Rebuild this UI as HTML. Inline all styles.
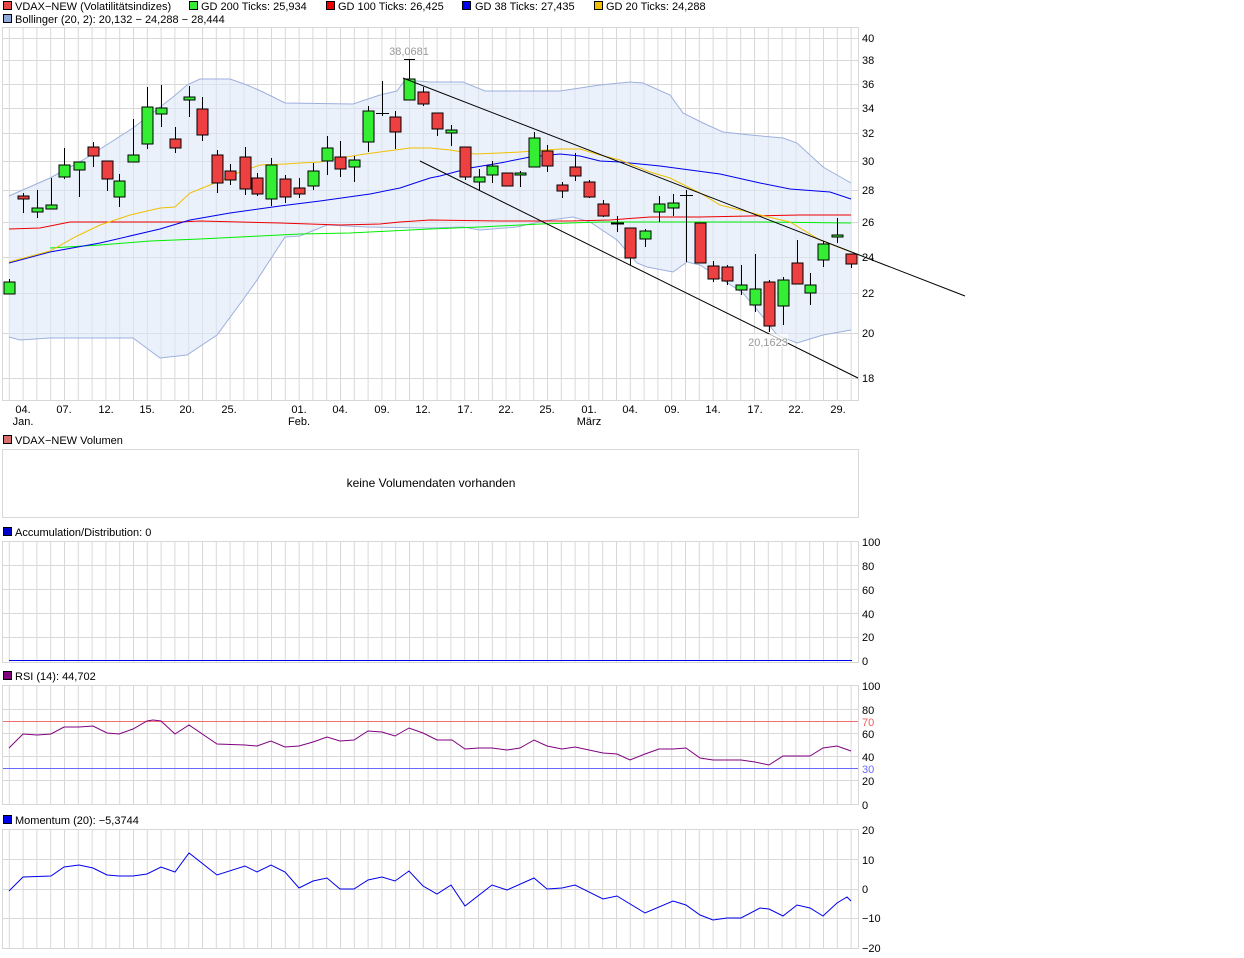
<!DOCTYPE html>
<html><head><meta charset="utf-8"><style>
body{margin:0;background:#fff;width:1244px;height:958px;overflow:hidden;font-family:"Liberation Sans",sans-serif}
svg{position:absolute;left:0;top:0}
text{font-family:"Liberation Sans",sans-serif;font-size:11px;fill:#000}
</style></head><body>
<svg width="1244" height="958" viewBox="0 0 1244 958">
<defs>
<pattern id="vg" patternUnits="userSpaceOnUse" x="8.8" y="0" width="13.8" height="958"><rect x="0" y="0" width="1" height="958" fill="#d8d8d8"/></pattern>
</defs>
<g stroke="#000" stroke-width="1">
<rect x="3.5" y="1.5" width="8" height="8" fill="#e84848"/>
<rect x="189.5" y="1.5" width="8" height="8" fill="#33ee33"/>
<rect x="326.5" y="1.5" width="8" height="8" fill="#ee0000"/>
<rect x="462.5" y="1.5" width="8" height="8" fill="#0000ee"/>
<rect x="594.5" y="1.5" width="8" height="8" fill="#f0c000"/>
<rect x="3.5" y="14.5" width="8" height="8" fill="#8fa8d8"/>
<rect x="3.5" y="435.5" width="8" height="8" fill="#d87070"/>
<rect x="3.5" y="527.5" width="8" height="8" fill="#0000cc"/>
<rect x="3.5" y="671.5" width="8" height="8" fill="#800080"/>
<rect x="3.5" y="815.5" width="8" height="8" fill="#0000ee"/>
</g>
<text x="15" y="10">VDAX−NEW (Volatilitätsindizes)</text>
<text x="201" y="10">GD 200 Ticks: 25,934</text>
<text x="338" y="10">GD 100 Ticks: 26,425</text>
<text x="475" y="10">GD 38 Ticks: 27,435</text>
<text x="606" y="10">GD 20 Ticks: 24,288</text>
<text x="15" y="23">Bollinger (20, 2): 20,132 − 24,288 − 28,444</text>
<text x="15" y="444">VDAX−NEW Volumen</text>
<text x="15" y="536">Accumulation/Distribution: 0</text>
<text x="15" y="680">RSI (14): 44,702</text>
<text x="15" y="824">Momentum (20): −5,3744</text>

<rect x="3" y="28" width="855" height="372" fill="url(#vg)"/>
<g stroke="#d8d8d8" stroke-width="1">
<line x1="3" y1="38.5" x2="858" y2="38.5"/><line x1="3" y1="60.5" x2="858" y2="60.5"/><line x1="3" y1="84.5" x2="858" y2="84.5"/><line x1="3" y1="108.5" x2="858" y2="108.5"/><line x1="3" y1="133.5" x2="858" y2="133.5"/><line x1="3" y1="161.5" x2="858" y2="161.5"/><line x1="3" y1="190.5" x2="858" y2="190.5"/><line x1="3" y1="222.5" x2="858" y2="222.5"/><line x1="3" y1="257.5" x2="858" y2="257.5"/><line x1="3" y1="293.5" x2="858" y2="293.5"/><line x1="3" y1="333.5" x2="858" y2="333.5"/><line x1="3" y1="378.5" x2="858" y2="378.5"/>
</g>
<rect x="2.5" y="27.5" width="856" height="373" fill="none" stroke="#d8d8d8"/>
<polygon fill="#dce8f8" fill-opacity="0.6" stroke="none" points="9,196 50,178 83,160 133,128 173,97 187,85 200,79 230,79 247,85 263,92 285,103 353,104 380,95 397,91 405,80 430,82 463,82 485,91 560,91 600,85 630,82 643,83 670,95 683,113 703,123 723,132 750,135 783,138 797,143 823,167 851,183 851,330 823,335 797,343 777,335 763,317 743,293 723,280 700,265 687,262 673,272 647,267 637,263 617,240 590,222 573,217 543,221 517,227 480,230 463,227 430,228 367,227 327,225 300,236 285,237 257,280 245,297 217,335 187,355 160,358 133,338 50,338 20,340 9,337"/>
<polyline fill="none" stroke="#9db0dd" points="9,196 50,178 83,160 133,128 173,97 187,85 200,79 230,79 247,85 263,92 285,103 353,104 380,95 397,91 405,80 430,82 463,82 485,91 560,91 600,85 630,82 643,83 670,95 683,113 703,123 723,132 750,135 783,138 797,143 823,167 851,183"/>
<polyline fill="none" stroke="#9db0dd" points="9,337 20,340 50,338 133,338 160,358 187,355 217,335 245,297 257,280 285,237 300,236 327,225 367,227 430,228 463,227 480,230 517,227 543,221 573,217 590,222 617,240 637,263 647,267 673,272 687,262 700,265 723,280 743,293 763,317 777,335 797,343 823,335 851,330"/>
<polyline fill="none" stroke="#00ee00" points="50,248 100,245 150,241 200,239 260,236 300,234 350,233 390,231 430,229 480,227 540,224 600,222 700,222 760,222 851,223"/>
<polyline fill="none" stroke="#ee0000" points="9,229 40,228 70,222 100,222 180,222 200,221 280,223 340,225 380,224 400,222 430,220 500,221 570,221 610,220 650,217 700,217 750,216 800,215 851,215"/>
<polyline fill="none" stroke="#0000ee" points="9,263 50,252 100,243 160,229 190,220 230,213 280,206 320,201 370,194 400,188 430,178 440,176 470,168 500,163 530,157 560,154 580,156 600,161 620,162 640,164 660,166 690,170 720,174 760,183 790,189 830,192 851,199"/>
<polyline fill="none" stroke="#f0c000" points="9,262 50,251 75,237 100,225 130,215 160,208 175,207 190,193 210,185 240,172 260,165 285,164 300,163 320,162 340,158 365,154 395,150 410,148 430,148 450,150 475,154 500,153 520,152 560,149 580,149 600,155 620,160 650,172 670,178 700,193 720,205 760,215 790,222 820,240 851,252"/>
<g stroke="#000" stroke-width="1">
<line x1="9.5" y1="279" x2="9.5" y2="294"/><rect x="4" y="282" width="11" height="12" fill="#33ee33"/>
<line x1="23.5" y1="193" x2="23.5" y2="213"/><rect x="18" y="196" width="11" height="3" fill="#ee4040"/>
<line x1="37.5" y1="190" x2="37.5" y2="218"/><rect x="32" y="208" width="11" height="4" fill="#33ee33"/>
<line x1="51.5" y1="178" x2="51.5" y2="209"/><rect x="46" y="205" width="11" height="4" fill="#33ee33"/>
<line x1="64.5" y1="148" x2="64.5" y2="179"/><rect x="59" y="165" width="11" height="12" fill="#33ee33"/>
<line x1="79.5" y1="162" x2="79.5" y2="197"/><rect x="74" y="162" width="11" height="8" fill="#33ee33"/>
<line x1="93.5" y1="142" x2="93.5" y2="167"/><rect x="88" y="147" width="11" height="9" fill="#ee4040"/>
<line x1="107.5" y1="161" x2="107.5" y2="191"/><rect x="102" y="161" width="11" height="18" fill="#ee4040"/>
<line x1="119.5" y1="174" x2="119.5" y2="207"/><rect x="114" y="181" width="11" height="16" fill="#33ee33"/>
<line x1="133.5" y1="119" x2="133.5" y2="162"/><rect x="128" y="155" width="11" height="7" fill="#33ee33"/>
<line x1="147.5" y1="87" x2="147.5" y2="149"/><rect x="142" y="107" width="11" height="37" fill="#33ee33"/>
<line x1="161.5" y1="85" x2="161.5" y2="127"/><rect x="156" y="108" width="11" height="6" fill="#33ee33"/>
<line x1="175.5" y1="127" x2="175.5" y2="153"/><rect x="170" y="139" width="11" height="9" fill="#ee4040"/>
<line x1="189.5" y1="86" x2="189.5" y2="117"/><rect x="184" y="97" width="11" height="3" fill="#33ee33"/>
<line x1="202.5" y1="97" x2="202.5" y2="141"/><rect x="197" y="109" width="11" height="26" fill="#ee4040"/>
<line x1="217.5" y1="150" x2="217.5" y2="193"/><rect x="212" y="155" width="11" height="28" fill="#ee4040"/>
<line x1="230.5" y1="164" x2="230.5" y2="185"/><rect x="225" y="171" width="11" height="9" fill="#ee4040"/>
<line x1="245.5" y1="147" x2="245.5" y2="195"/><rect x="240" y="157" width="11" height="32" fill="#ee4040"/>
<line x1="257.5" y1="173" x2="257.5" y2="196"/><rect x="252" y="178" width="11" height="16" fill="#ee4040"/>
<line x1="271.5" y1="158" x2="271.5" y2="206"/><rect x="266" y="165" width="11" height="34" fill="#33ee33"/>
<line x1="285.5" y1="175" x2="285.5" y2="203"/><rect x="280" y="179" width="11" height="18" fill="#ee4040"/>
<line x1="299.5" y1="178" x2="299.5" y2="198"/><rect x="294" y="188" width="11" height="6" fill="#ee4040"/>
<line x1="313.5" y1="163" x2="313.5" y2="190"/><rect x="308" y="171" width="11" height="15" fill="#33ee33"/>
<line x1="327.5" y1="136" x2="327.5" y2="175"/><rect x="322" y="148" width="11" height="13" fill="#33ee33"/>
<line x1="340.5" y1="141" x2="340.5" y2="177"/><rect x="335" y="157" width="11" height="12" fill="#ee4040"/>
<line x1="354.5" y1="156" x2="354.5" y2="182"/><rect x="349" y="160" width="11" height="7" fill="#33ee33"/>
<line x1="368.5" y1="106" x2="368.5" y2="152"/><rect x="363" y="111" width="11" height="31" fill="#33ee33"/>
<line x1="382.5" y1="81" x2="382.5" y2="116"/><line x1="376" y1="113.5" x2="389" y2="113.5"/>
<line x1="395.5" y1="111" x2="395.5" y2="149"/><rect x="390" y="117" width="11" height="15" fill="#ee4040"/>
<line x1="409.5" y1="59" x2="409.5" y2="100"/><line x1="404" y1="59.5" x2="415" y2="59.5"/><rect x="404" y="79" width="11" height="21" fill="#33ee33"/>
<line x1="423.5" y1="87" x2="423.5" y2="106"/><rect x="418" y="92" width="11" height="12" fill="#ee4040"/>
<line x1="437.5" y1="113" x2="437.5" y2="136"/><rect x="432" y="113" width="11" height="16" fill="#ee4040"/>
<line x1="451.5" y1="125" x2="451.5" y2="146"/><rect x="446" y="130" width="11" height="3" fill="#33ee33"/>
<line x1="465.5" y1="147" x2="465.5" y2="180"/><rect x="460" y="147" width="11" height="30" fill="#ee4040"/>
<line x1="479.5" y1="169" x2="479.5" y2="190"/><rect x="474" y="177" width="11" height="5" fill="#33ee33"/>
<line x1="492.5" y1="161" x2="492.5" y2="183"/><rect x="487" y="166" width="11" height="9" fill="#33ee33"/>
<rect x="502" y="173" width="11" height="13" fill="#ee4040"/>
<line x1="520.5" y1="171" x2="520.5" y2="187"/><rect x="515" y="173" width="11" height="2" fill="#33ee33"/>
<line x1="534.5" y1="132" x2="534.5" y2="167"/><rect x="529" y="138" width="11" height="29" fill="#33ee33"/>
<line x1="547.5" y1="145" x2="547.5" y2="172"/><rect x="542" y="151" width="11" height="15" fill="#ee4040"/>
<line x1="562.5" y1="182" x2="562.5" y2="198"/><rect x="557" y="185" width="11" height="6" fill="#ee4040"/>
<line x1="575.5" y1="153" x2="575.5" y2="181"/><rect x="570" y="167" width="11" height="9" fill="#ee4040"/>
<line x1="589.5" y1="180" x2="589.5" y2="198"/><rect x="584" y="182" width="11" height="15" fill="#ee4040"/>
<line x1="603.5" y1="200" x2="603.5" y2="217"/><rect x="598" y="204" width="11" height="12" fill="#ee4040"/>
<line x1="617.5" y1="216" x2="617.5" y2="232"/><line x1="611" y1="223.5" x2="624" y2="223.5" stroke-width="2"/>
<line x1="630.5" y1="228" x2="630.5" y2="265"/><rect x="625" y="228" width="11" height="30" fill="#ee4040"/>
<line x1="645.5" y1="229" x2="645.5" y2="247"/><rect x="640" y="231" width="11" height="8" fill="#33ee33"/>
<line x1="659.5" y1="196" x2="659.5" y2="222"/><rect x="654" y="204" width="11" height="8" fill="#33ee33"/>
<line x1="673.5" y1="194" x2="673.5" y2="216"/><rect x="668" y="203" width="11" height="5" fill="#33ee33"/>
<line x1="686.5" y1="190" x2="686.5" y2="262"/><line x1="680" y1="195.5" x2="693" y2="195.5"/>
<rect x="695" y="223" width="11" height="40" fill="#ee4040"/>
<line x1="713.5" y1="261" x2="713.5" y2="282"/><rect x="708" y="266" width="11" height="13" fill="#ee4040"/>
<line x1="727.5" y1="265" x2="727.5" y2="285"/><rect x="722" y="267" width="11" height="14" fill="#ee4040"/>
<line x1="741.5" y1="265" x2="741.5" y2="295"/><rect x="736" y="285" width="11" height="5" fill="#33ee33"/>
<line x1="755.5" y1="254" x2="755.5" y2="312"/><rect x="750" y="289" width="11" height="16" fill="#33ee33"/>
<line x1="769.5" y1="280" x2="769.5" y2="332"/><rect x="764" y="282" width="11" height="44" fill="#ee4040"/>
<line x1="783.5" y1="277" x2="783.5" y2="325"/><rect x="778" y="280" width="11" height="26" fill="#33ee33"/>
<line x1="797.5" y1="240" x2="797.5" y2="284"/><rect x="792" y="263" width="11" height="21" fill="#ee4040"/>
<line x1="810.5" y1="273" x2="810.5" y2="305"/><rect x="805" y="285" width="11" height="8" fill="#33ee33"/>
<line x1="823.5" y1="241" x2="823.5" y2="267"/><rect x="818" y="244" width="11" height="16" fill="#33ee33"/>
<line x1="837.5" y1="218" x2="837.5" y2="243"/><rect x="832" y="235" width="11" height="2" fill="#33ee33"/>
<line x1="851.5" y1="254" x2="851.5" y2="268"/><rect x="846" y="254" width="11" height="10" fill="#ee4040"/>
</g>
<line x1="403" y1="78" x2="965" y2="296" stroke="#000"/>
<line x1="420" y1="161" x2="858" y2="378" stroke="#000"/>
<text x="409" y="55" text-anchor="middle" style="fill:#999">38,0681</text>
<rect x="748" y="334" width="40" height="13" fill="#fff" fill-opacity="0.7"/>
<text x="768" y="346" text-anchor="middle" style="fill:#999">20,1623</text>
<g>
<text x="862" y="42">40</text><text x="862" y="64">38</text><text x="862" y="88">36</text><text x="862" y="112">34</text><text x="862" y="137">32</text><text x="862" y="165">30</text><text x="862" y="194">28</text><text x="862" y="226">26</text><text x="862" y="261">24</text><text x="862" y="297">22</text><text x="862" y="337">20</text><text x="862" y="382">18</text>
</g>
<g text-anchor="middle">
<text x="23" y="413">04.</text><text x="23" y="425">Jan.</text>
<text x="64" y="413">07.</text><text x="106" y="413">12.</text><text x="147" y="413">15.</text><text x="187" y="413">20.</text><text x="229" y="413">25.</text>
<text x="299" y="413">01.</text><text x="299" y="425">Feb.</text>
<text x="340" y="413">04.</text><text x="382" y="413">09.</text><text x="423" y="413">12.</text><text x="465" y="413">17.</text><text x="506" y="413">22.</text><text x="547" y="413">25.</text>
<text x="589" y="413">01.</text><text x="589" y="425">März</text>
<text x="630" y="413">04.</text><text x="672" y="413">09.</text><text x="713" y="413">14.</text><text x="755" y="413">17.</text><text x="796" y="413">22.</text><text x="838" y="413">29.</text>
</g>

<rect x="2.5" y="449.5" width="856" height="68" fill="none" stroke="#d8d8d8"/>
<text x="431" y="487" text-anchor="middle" style="font-size:12px">keine Volumendaten vorhanden</text>

<rect x="3" y="541" width="855" height="121" fill="url(#vg)"/>
<g stroke="#d8d8d8">
<line x1="3" y1="565.5" x2="858" y2="565.5"/><line x1="3" y1="589.5" x2="858" y2="589.5"/><line x1="3" y1="613.5" x2="858" y2="613.5"/><line x1="3" y1="637.5" x2="858" y2="637.5"/>
</g>
<rect x="2.5" y="541.5" width="856" height="121" fill="none" stroke="#d8d8d8"/>
<line x1="9" y1="660.5" x2="852" y2="660.5" stroke="#0000ee"/>
<text x="862" y="546">100</text><text x="862" y="570">80</text><text x="862" y="594">60</text><text x="862" y="618">40</text><text x="862" y="641">20</text><text x="862" y="665">0</text>

<rect x="3" y="685" width="855" height="119" fill="url(#vg)"/>
<g stroke="#d8d8d8">
<line x1="3" y1="709.5" x2="858" y2="709.5"/><line x1="3" y1="733.5" x2="858" y2="733.5"/><line x1="3" y1="756.5" x2="858" y2="756.5"/><line x1="3" y1="780.5" x2="858" y2="780.5"/>
</g>
<rect x="2.5" y="685.5" width="856" height="119" fill="none" stroke="#d8d8d8"/>
<line x1="3" y1="721.5" x2="858" y2="721.5" stroke="#f07070"/>
<line x1="3" y1="768.5" x2="858" y2="768.5" stroke="#6868ff"/>
<polyline fill="none" stroke="#800080" points="9,748 23,734 37,735 51,734 64,727 79,727 93,726 107,733 119,734 133,729 147,721 153,720 161,721 175,734 189,725 217,744 245,745 257,746 271,741 285,747 299,746 313,742 327,737 340,741 354,740 368,731 382,732 395,736 409,728 423,733 437,740 452,740 465,749 479,748 492,748 507,750 520,748 534,740 547,746 562,749 575,747 589,750 603,753 617,754 630,760 645,754 659,749 673,749 686,748 700,758 713,760 741,760 755,762 769,765 783,756 810,756 823,748 837,746 851,751"/>
<text x="862" y="690">100</text><text x="862" y="714">80</text><text x="862" y="726" style="fill:#f06060">70</text><text x="862" y="738">60</text><text x="862" y="761">40</text><text x="862" y="773" style="fill:#6868ff">30</text><text x="862" y="785">20</text><text x="862" y="809">0</text>

<rect x="3" y="829" width="855" height="119" fill="url(#vg)"/>
<g stroke="#d8d8d8">
<line x1="3" y1="859.5" x2="858" y2="859.5"/><line x1="3" y1="889.5" x2="858" y2="889.5"/><line x1="3" y1="918.5" x2="858" y2="918.5"/>
</g>
<rect x="2.5" y="829.5" width="856" height="119" fill="none" stroke="#d8d8d8"/>
<polyline fill="none" stroke="#0000ee" points="9,891 23,877 51,876 64,867 79,865 93,868 107,875 119,876 133,876 147,874 161,867 175,872 189,853 217,875 245,866 257,872 271,865 285,872 299,888 313,881 327,878 340,889 354,889 368,880 382,877 395,881 409,871 423,886 437,894 451,885 465,906 492,885 507,890 534,878 547,889 562,888 575,885 603,899 617,896 645,913 673,901 686,905 700,915 713,920 727,918 741,918 760,908 769,909 783,916 797,905 810,908 823,916 837,903 847,897 851,901"/>
<text x="862" y="834">20</text><text x="862" y="864">10</text><text x="862" y="893">0</text><text x="862" y="922">−10</text><text x="862" y="952">−20</text>
</svg>
</body></html>
